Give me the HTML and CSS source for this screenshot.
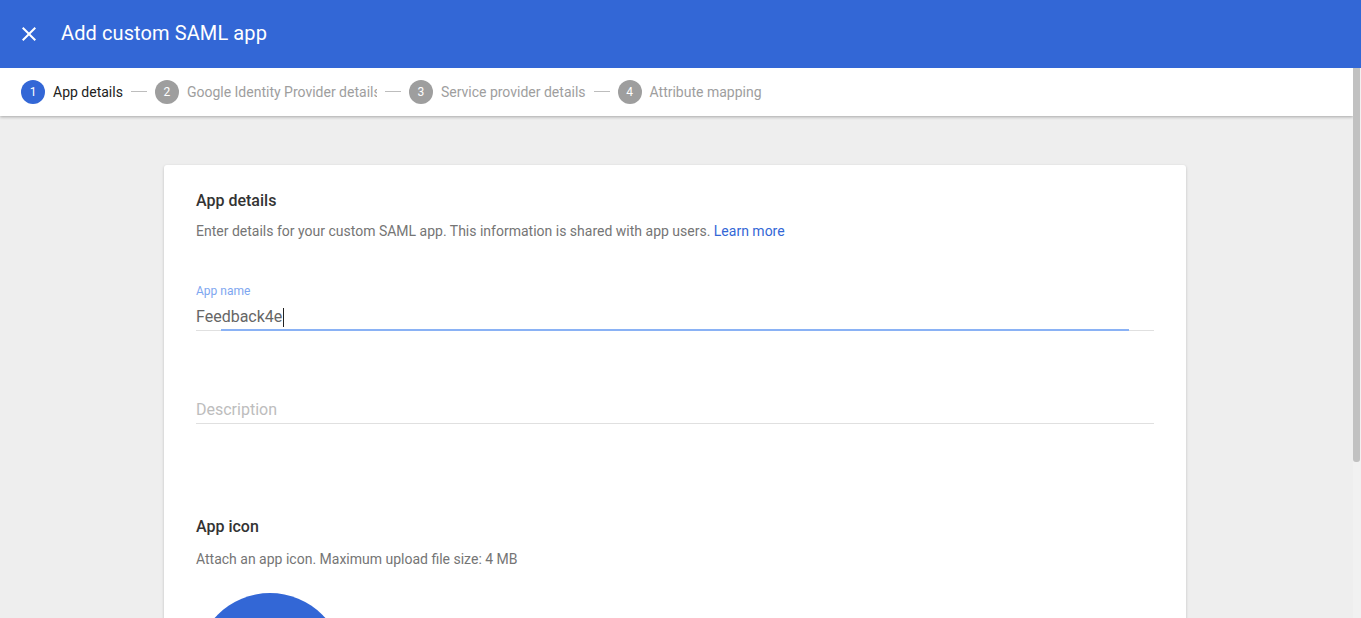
FILE: index.html
```html
<!DOCTYPE html>
<html lang="en">
<head>
    <meta charset="UTF-8">
    <meta name="viewport" content="width=device-width, initial-scale=1.0">
    <title>Add custom SAML app</title>
    <link rel="stylesheet" href="styles.css">
</head>
<body>

<!-- top bar -->
<header class="app-bar">
    <span class="close-btn">
        <svg width="24" height="24" viewBox="0 0 24 24"><path d="M19 6.41L17.59 5 12 10.59 6.41 5 5 6.41 10.59 12 5 17.59 6.41 19 12 13.41 17.59 19 19 17.59 13.41 12z" fill="#fff"/></svg>
    </span>
    <h1>Add custom SAML app</h1>
</header>

<div class="main">
    <div class="content">
        <!-- steps -->
        <nav class="stepper">
            <div class="step active"><span class="num">1</span><span class="label">App details</span></div>
            <span class="connector"></span>
            <div class="step"><span class="num">2</span><span class="label clip">Google Identity Provider details</span></div>
            <span class="connector"></span>
            <div class="step"><span class="num">3</span><span class="label">Service provider details</span></div>
            <span class="connector"></span>
            <div class="step"><span class="num">4</span><span class="label">Attribute mapping</span></div>
        </nav>

        <div class="page">
            <div class="card">
                <h2>App details</h2>
                <p class="hint">Enter details for your custom SAML app. This information is shared with app users. <a href="#">Learn more</a></p>

                <div class="field focused">
                    <label>App name</label>
                    <div class="value">Feedback4e<span class="caret"></span></div>
                    <div class="underline"><span class="ripple"></span></div>
                </div>

                <div class="field desc">
                    <div class="value placeholder">Description</div>
                    <div class="underline"></div>
                </div>

                <h2 class="icon-title">App icon</h2>
                <p class="hint">Attach an app icon. Maximum upload file size: 4 MB</p>
                <div class="icon-circle"></div>
            </div>
        </div>
    </div>

    <!-- scrollbar -->
    <div class="scrollbar"><div class="thumb"></div></div>
</div>

</body>
</html>
```

FILE: styles.css
```css
html, body {
    margin: 0;
    height: 100%;
    overflow: hidden;
}
body {
    font-family: Roboto, 'Liberation Sans', Arial, sans-serif;
    background-color: #eeeeee;
    color: #212121;
}
.app-bar {
    height: 68px;
    background-color: #3367d6;
    display: flex;
    align-items: center;
    padding-left: 17px;
}
.close-btn {
    width: 24px;
    height: 24px;
    display: flex;
}
.app-bar h1 {
    margin: 0 0 2px 20px;
    font-size: 20px;
    font-weight: 400;
    color: #fff;
    letter-spacing: 0.1px;
}
.main {
    display: flex;
    height: calc(100% - 68px);
}
.content {
    flex: 1;
    overflow: hidden;
}
.stepper {
    height: 47px;
    padding-bottom: 1px;
    background-color: #fff;
    display: flex;
    align-items: center;
    padding-left: 21px;
    box-shadow: 0 1px 3px rgba(0, 0, 0, 0.3);
    position: relative;
    z-index: 1;
}
.step {
    display: flex;
    align-items: center;
    font-size: 14px;
    color: #9e9e9e;
}
.step .num {
    width: 24px;
    height: 24px;
    border-radius: 50%;
    background-color: #9e9e9e;
    color: #fff;
    font-size: 12px;
    display: flex;
    align-items: center;
    justify-content: center;
    margin-right: 8px;
}
.step.active {
    color: #212121;
}
.step.active .num {
    background-color: #3367d6;
}
.step .clip {
    max-width: 190px;
    overflow: hidden;
    white-space: nowrap;
}
.connector {
    width: 16px;
    height: 1px;
    background-color: #bdbdbd;
    margin: 0 8px;
}
.page {
    padding: 49px 3px 0 0;
}
.card {
    width: 958px;
    min-height: 600px;
    margin: 0 auto;
    padding: 24px 32px;
    background-color: #fff;
    border-radius: 3px;
    box-shadow: 0 1px 3px rgba(0, 0, 0, 0.2);
}
.card h2 {
    margin: 0 0 8px;
    font-size: 16px;
    line-height: 24px;
    font-weight: 500;
    color: #333;
}
.hint {
    margin: 0;
    font-size: 14px;
    line-height: 20px;
    color: #757575;
}
.hint a {
    color: #3367d6;
    text-decoration: none;
}
.field {
    margin-top: 42px;
}
.field label {
    display: block;
    font-size: 12px;
    line-height: 16px;
    color: #7ea6f0;
    margin-bottom: 6px;
}
.field .value {
    font-size: 16px;
    line-height: 24px;
    color: #666;
    display: flex;
    align-items: center;
}
.caret {
    width: 1px;
    height: 19px;
    background-color: #212121;
    margin-left: 1px;
}
.field .placeholder {
    color: #bdbdbd;
}
.underline {
    height: 1px;
    margin-top: 1px;
    background-color: #e0e0e0;
    position: relative;
}
.ripple {
    position: absolute;
    left: 25px;
    right: 25px;
    top: -1px;
    height: 2px;
    background-color: #8ab2f5;
}
.field.desc {
    margin-top: 67px;
}
.card h2.icon-title {
    margin-top: 91px;
    margin-bottom: 10px;
}
.icon-circle {
    width: 148px;
    height: 148px;
    border-radius: 50%;
    background-color: #3367d6;
    margin-top: 24px;
}
.scrollbar {
    width: 8px;
    background-color: #f1f1f1;
}
.scrollbar .thumb {
    width: 7px;
    height: 394px;
    background-color: #c1c1c1;
    border-radius: 0 0 3px 3px;
}
```
